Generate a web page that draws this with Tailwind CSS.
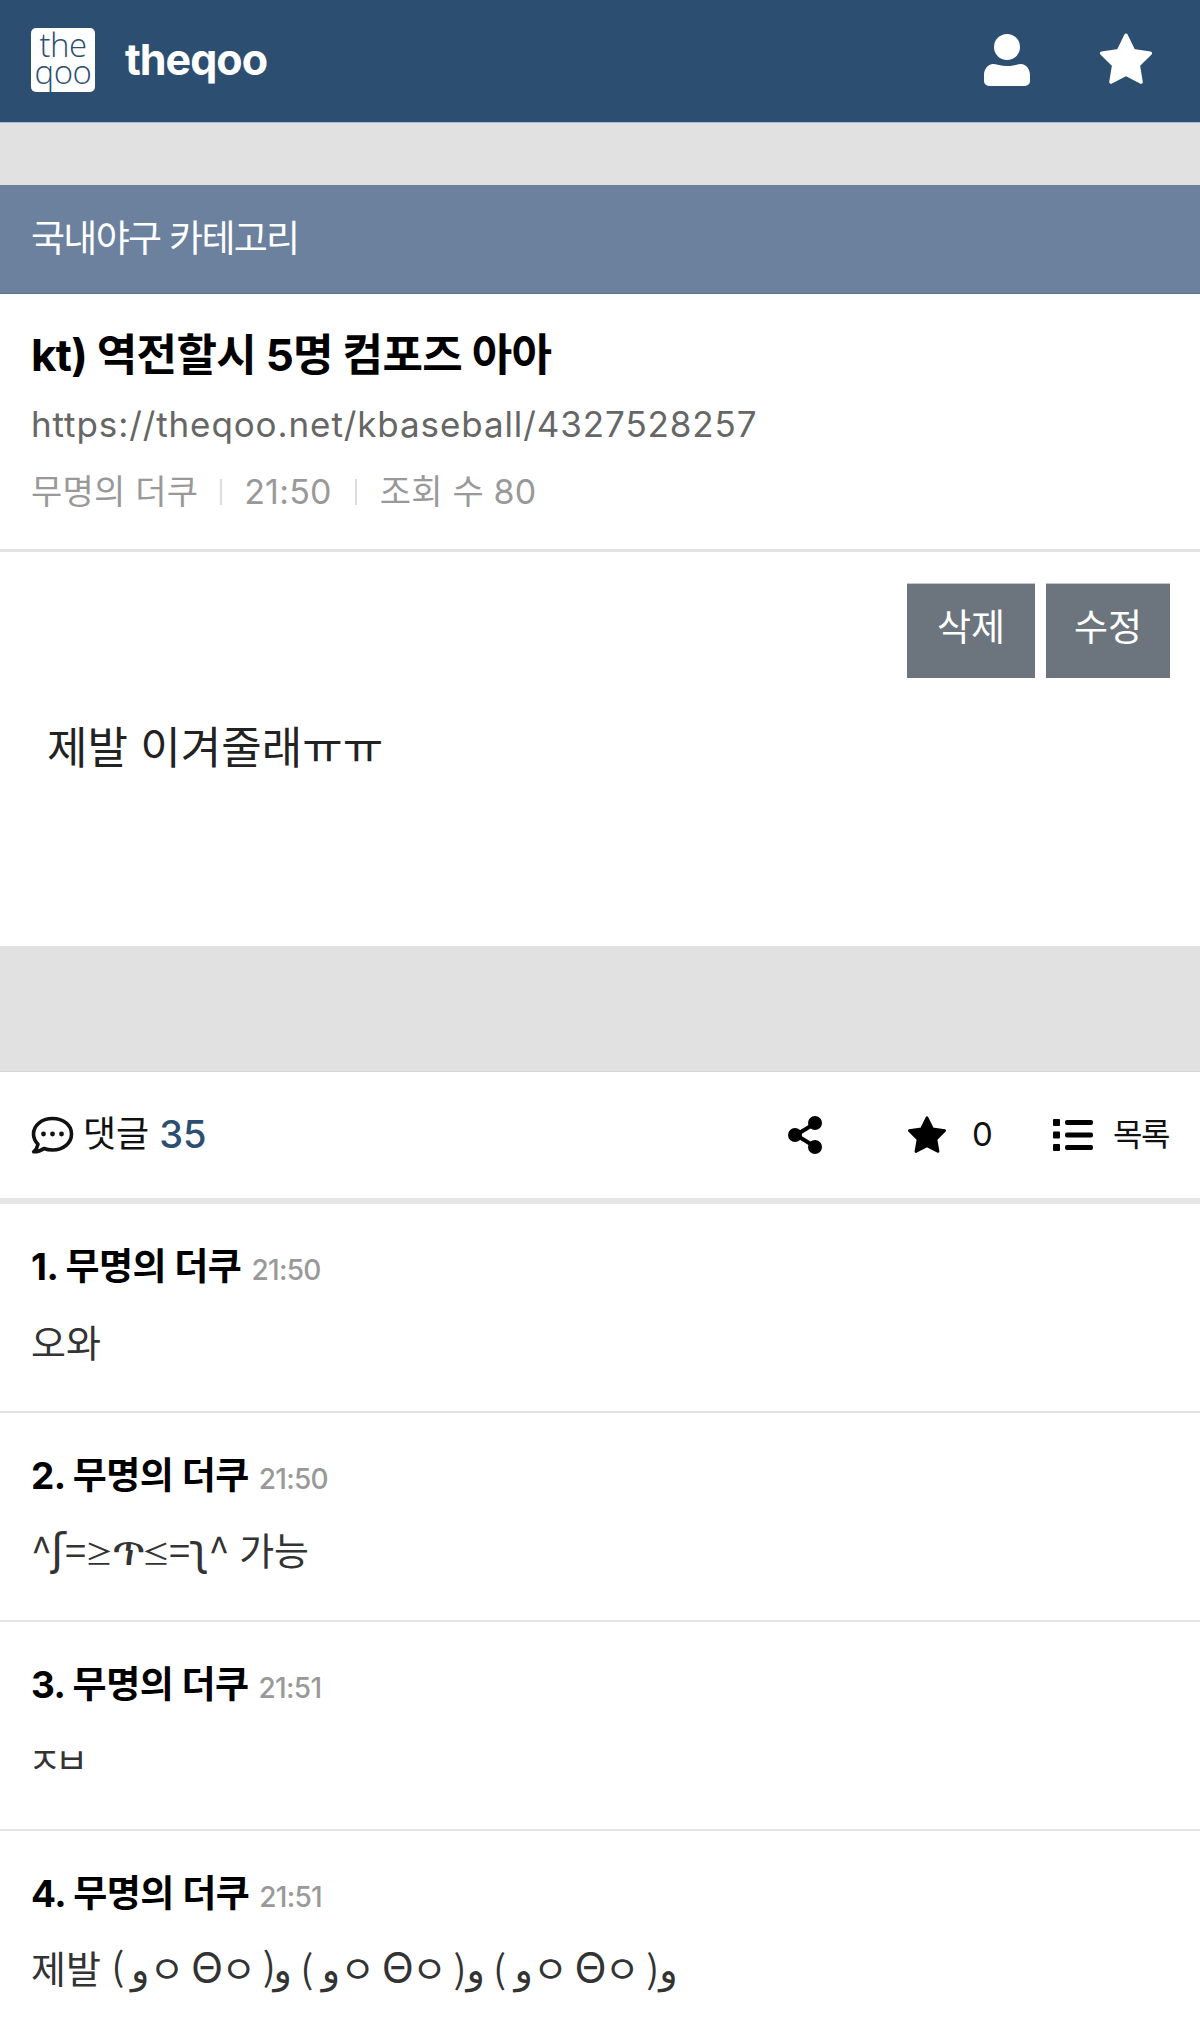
<!DOCTYPE html>
<html lang="ko">
<head>
<meta charset="utf-8">
<script src="https://cdn.jsdelivr.net/npm/@tailwindcss/browser@4"></script>
</head>
<body class="bg-white font-['Inter','Noto_Sans_CJK_KR',sans-serif] overflow-hidden">
<div class="w-[1200px] h-[2027px] overflow-hidden">
  <header class="h-[123px] bg-[#2c4f71] border-b border-[#a9bccd] flex items-center pl-[31px] pr-[46px]">
    <div class="w-[64px] h-[64px] mt-[-2px] bg-white rounded-[5px] flex flex-col items-center justify-center text-[#2c4f71] font-['Open_Sans'] font-light text-[33px] leading-[27px] tracking-[-0.500px] pb-[5px]">
      <span>the</span><span>qoo</span>
    </div>
    <span class="ml-[30px] mt-[-4px] text-white text-[43px] leading-none font-bold tracking-[-1px]">theqoo</span>
    <div class="ml-auto flex items-center gap-[68px] mt-[-2px]">
      <svg class="w-[46px] h-[52px]" viewBox="0 0 46 52"><circle cx="23" cy="13" r="13" fill="#fff"/><path d="M9 30c3 0 8 2 14 2s11-2 14-2c5 0 9 5 9 11v6a5 5 0 0 1-5 5H5a5 5 0 0 1-5-5v-6c0-6 4-11 9-11z" fill="#fff"/></svg>
      <svg class="w-[56px] h-[54px]" viewBox="0 0 24 23"><path d="M12 1l3.200 6.600 7.200 1-5.200 5.100 1.200 7.200L12 17.500l-6.400 3.400 1.200-7.200L1.600 8.600l7.200-1z" fill="#fff" stroke="#fff" stroke-width="1.600" stroke-linejoin="round"/></svg>
    </div>
  </header>
  <div class="h-[62px] bg-[#e1e1e1]"></div>
  <div class="h-[109px] bg-[#6b819e] border-b border-[#5d7189] flex items-center px-[31px] text-white text-[37px] font-normal tracking-[-1.700px]">국내야구 카테고리</div>

  <section class="h-[258px] border-b-[3px] border-[#e3e3e3] px-[31px] pt-[31px]">
    <h1 class="text-[44px] leading-[60px] font-bold text-black tracking-[-0.700px]">kt) 역전할시 5명 컴포즈 아아</h1>
    <div class="mt-[14px] text-[35px] leading-[50px] text-[#666] tracking-[0.900px] font-normal whitespace-nowrap">https://theqoo.net/kbaseball/4327528257</div>
    <div class="mt-[18px] flex items-center text-[34px] leading-[50px] text-[#999] font-normal tracking-[0.200px]">
      <span>무명의 더쿠</span><span class="w-[2px] h-[26px] bg-[#ddd] mx-[22px]"></span><span>21:50</span><span class="w-[2px] h-[26px] bg-[#ddd] mx-[23px]"></span><span>조회 수 80</span>
    </div>
  </section>

  <section class="h-[394px] px-[30px] pt-[31px]">
    <div class="flex justify-end gap-[11px]">
      <div class="w-[128px] h-[95px] bg-[#6c757d] border-t border-[#c4c8cc] text-white text-[37px] font-normal flex items-center justify-center pb-[6px]">삭제</div>
      <div class="w-[124px] h-[95px] bg-[#6c757d] border-t border-[#c4c8cc] text-white text-[37px] font-normal flex items-center justify-center pb-[6px]">수정</div>
    </div>
    <p class="mt-[40px] ml-[17px] text-[44px] leading-[60px] text-[#222] font-normal">제발 이겨줄래ㅠㅠ</p>
  </section>

  <div class="h-[126px] bg-[#e1e1e1] border-b border-[#d6d6d6]"></div>

  <div class="h-[132px] border-b-[6px] border-[#e6e6e6] flex items-center px-[31px]">
    <svg class="w-[43px] h-[38px] shrink-0" viewBox="0 0 43 38"><path d="M21.500 2.500C10.500 2.500 2.500 9.500 2.500 18c0 4 1.800 7.500 4.500 10.200-.5 2.800-1.800 5.300-4.300 7.600 3.700 0 7.500-1.200 10.300-3.300 2.600 1 5.400 1.500 8.500 1.500 11 0 19-7 19-16s-8-15.500-19-15.500z" fill="none" stroke="#111" stroke-width="3.600" stroke-linejoin="round"/><circle cx="12.500" cy="18" r="2.400" fill="#111"/><circle cx="21.500" cy="18" r="2.400" fill="#111"/><circle cx="30.500" cy="18" r="2.400" fill="#111"/></svg>
    <span class="ml-[9px] text-[36px] text-[#111] font-normal mt-[-2px]">댓글</span>
    <span class="ml-[10px] text-[38px] text-[#2c4f71] font-medium mt-[-2px]">35</span>
    <svg class="ml-auto w-[34px] h-[38px] shrink-0" viewBox="0 0 34 38"><path d="M26 8L8 19l18 11" fill="none" stroke="#000" stroke-width="4"/><circle cx="27" cy="7" r="7" fill="#000"/><circle cx="7" cy="19" r="7" fill="#000"/><circle cx="27" cy="31" r="7" fill="#000"/></svg>
    <svg class="ml-[84px] w-[42px] h-[40px] shrink-0" viewBox="0 0 24 23"><path d="M12 1.500l3.200 6.500 7 1-5 5 1.200 7L12 17.700 5.600 21l1.200-7-5-5 7-1z" fill="#000" stroke="#000" stroke-width="1.500" stroke-linejoin="round"/></svg>
    <span class="ml-[24px] text-[33px] text-[#111] font-normal w-[24px]">0</span>
    <svg class="ml-[57px] w-[40px] h-[32px] shrink-0" viewBox="0 0 40 32"><rect x="0" y="0" width="7" height="7" rx="1" fill="#000"/><rect x="0" y="12.500" width="7" height="7" rx="1" fill="#000"/><rect x="0" y="25" width="7" height="7" rx="1" fill="#000"/><rect x="12" y="1" width="28" height="5" rx="2" fill="#000"/><rect x="12" y="13.500" width="28" height="5" rx="2" fill="#000"/><rect x="12" y="26" width="28" height="5" rx="2" fill="#000"/></svg>
    <span class="ml-[20px] text-[32px] text-[#111] font-normal tracking-[-1.500px]">목록</span>
  </div>

  <ul>
    <li class="h-[209px] border-b-2 border-[#e3e3e3] px-[31px] pt-[35px]">
      <div class="flex items-baseline h-[54px]"><strong class="text-[37px] font-bold text-black tracking-[-0.500px]">1. 무명의 더쿠</strong><span class="ml-[10px] text-[28px] text-[#999] font-medium tracking-[-0.700px]">21:50</span></div>
      <p class="mt-[25px] text-[38px] leading-[50px] text-[#333] font-normal">오와</p>
    </li>
    <li class="h-[209px] border-b-2 border-[#e3e3e3] px-[31px] pt-[35px]">
      <div class="flex items-baseline h-[54px]"><strong class="text-[37px] font-bold text-black tracking-[-0.500px]">2. 무명의 더쿠</strong><span class="ml-[10px] text-[28px] text-[#999] font-medium tracking-[-0.700px]">21:50</span></div>
      <p class="mt-[22px] text-[38px] leading-[50px] text-[#333] font-normal whitespace-nowrap font-['Noto_Sans_CJK_KR','DejaVu_Sans',sans-serif]"><span class="tracking-[-1px]">^<span class="text-[44px] leading-none">ʃ</span>=<span class="text-[28px]">≥</span><span class="text-[44px] leading-none tracking-[-3px]">ጥ</span><span class="text-[28px]">≤</span>=<span class="text-[44px] leading-none">ʅ</span>^</span> 가능</p>
    </li>
    <li class="h-[209px] border-b-2 border-[#e3e3e3] px-[31px] pt-[35px]">
      <div class="flex items-baseline h-[54px]"><strong class="text-[37px] font-bold text-black tracking-[-0.500px]">3. 무명의 더쿠</strong><span class="ml-[10px] text-[28px] text-[#999] font-medium tracking-[-0.700px]">21:51</span></div>
      <p class="mt-[25px] ml-[-3px] text-[36px] leading-[50px] text-[#333] font-normal tracking-[-6px]">ㅈㅂ</p>
    </li>
    <li class="px-[31px] pt-[35px]">
      <div class="flex items-baseline h-[54px]"><strong class="text-[37px] font-bold text-black tracking-[-0.500px]">4. 무명의 더쿠</strong><span class="ml-[10px] text-[28px] text-[#999] font-medium tracking-[-0.700px]">21:51</span></div>
      <p class="mt-[22px] text-[38px] leading-[50px] text-[#333] font-normal whitespace-nowrap font-['Noto_Sans_CJK_KR','DejaVu_Sans',sans-serif]">제발 <span class="tracking-[-2px]">( &lrm;و&lrm;ㅇ <span class="text-[42px] leading-none font-['Inter']">Θ</span>ㅇ )&lrm;و&lrm; ( &lrm;و&lrm;ㅇ <span class="text-[42px] leading-none font-['Inter']">Θ</span>ㅇ )&lrm;و&lrm; ( &lrm;و&lrm;ㅇ <span class="text-[42px] leading-none font-['Inter']">Θ</span>ㅇ )&lrm;و&lrm;</span></p>
    </li>
  </ul>
</div>
</body>
</html>
